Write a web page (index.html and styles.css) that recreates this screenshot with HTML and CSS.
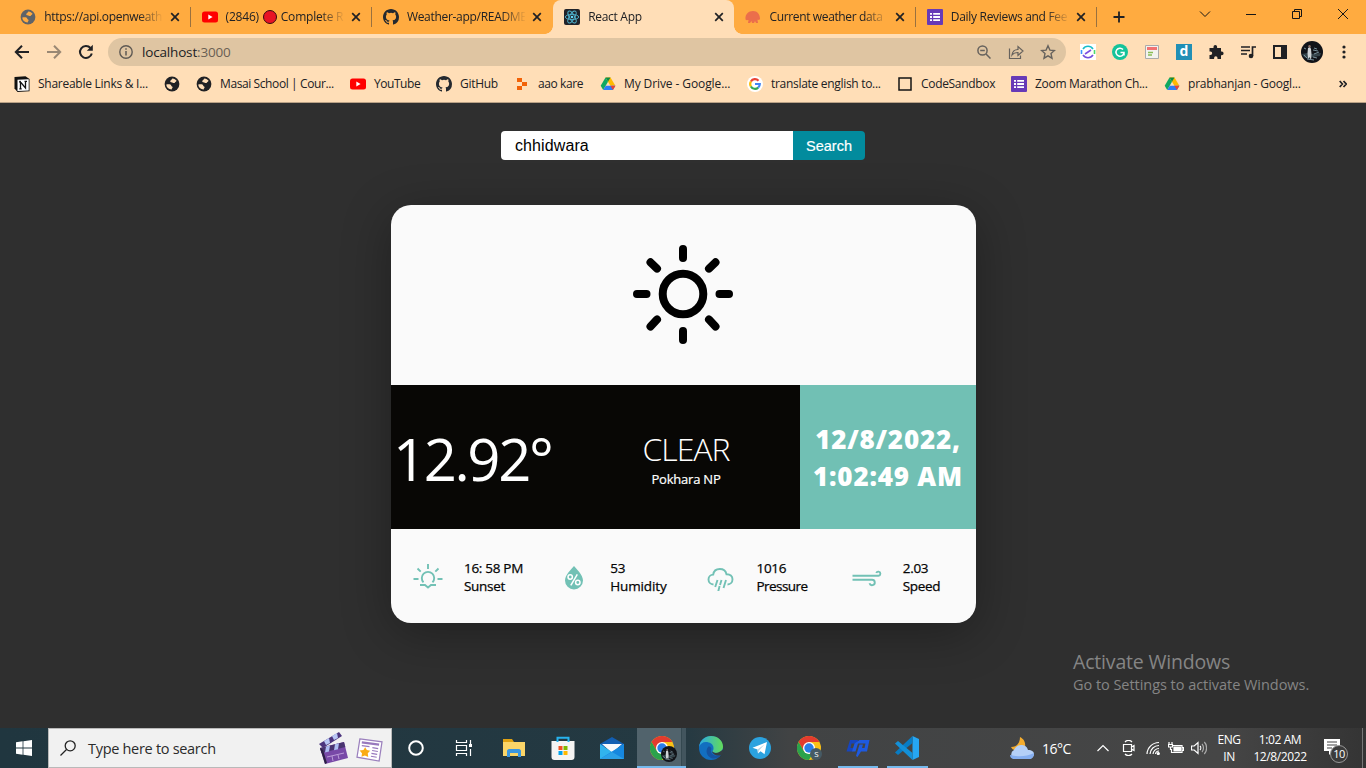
FILE: index.html
```html
<!DOCTYPE html>
<html lang="en">
<head>
<meta charset="utf-8">
<title>React App</title>
<link rel="stylesheet" href="styles.css">
</head>
<body>
<svg class="defs" aria-hidden="true">
  <defs>
    <symbol id="globe" viewBox="0 0 16 16"><circle cx="8" cy="8" r="7.400" fill="currentColor"/><path class="cut" d="M2.300 8.600C4 8.200 7 8 7.300 9.700c.2 1 1.300.6 1.300 1.500 0 1-.9 1-.9 2.300C4.800 13.600 2.400 11.300 2.300 8.600zM6.200 5.300c0-1 1.300-.8 1.400-1.700.1-.6.300-1 .9-1.200 1.700.2 3.200 1 4.100 2.400-.3 1-1.300.9-1.600 1.600-.3.800-1.600.9-2.200.3-.7-.6-2.600 0-2.600-1.400z"/></symbol>
    <symbol id="yt" viewBox="0 0 16 16"><rect y="2.500" width="16" height="11" rx="2.500" fill="#f00"/><path d="M6.300 5.500v5l4.300-2.500z" fill="#fff"/></symbol>
    <symbol id="gh" viewBox="0 0 16 16"><path fill="#24292f" d="M8 0C3.580 0 0 3.580 0 8c0 3.540 2.290 6.530 5.470 7.590.4.070.55-.17.55-.38 0-.19-.01-.82-.01-1.490-2.010.37-2.530-.49-2.690-.94-.09-.23-.48-.94-.82-1.130-.28-.15-.68-.52-.01-.53.63-.01 1.080.58 1.230.82.72 1.210 1.870.87 2.330.66.070-.52.280-.87.510-1.070-1.780-.2-3.640-.89-3.640-3.950 0-.87.310-1.590.82-2.150-.08-.2-.36-1.020.080-2.120 0 0 .67-.21 2.200.82a7.600 7.600 0 0 1 4 0c1.530-1.040 2.200-.82 2.200-.82.440 1.100.160 1.920.080 2.120.510.560.82 1.270.82 2.150 0 3.070-1.870 3.750-3.650 3.950.290.250.540.730.540 1.480 0 1.070-.01 1.930-.01 2.200 0 .210.150.460.550.380A8.010 8.010 0 0 0 16 8c0-4.420-3.580-8-8-8z"/></symbol>
    <symbol id="close" viewBox="0 0 10 10"><path d="M1.200 1.200l7.600 7.600M8.800 1.200L1.200 8.800" stroke="#202124" stroke-width="1.700"/></symbol>
    <symbol id="forms" viewBox="0 0 16 16"><rect width="16" height="16" rx="1" fill="#673ab7"/><path d="M3 4.800h2m1.200 0H13M3 8h2m1.200 0H13M3 11.200h2m1.200 0H13" stroke="#fff" stroke-width="1.800"/></symbol>
    <symbol id="drive" viewBox="0 0 16 16"><path d="M5.500 1.500h5l4.900 8.300h-5z" fill="#ffba00"/><path d="M5.500 1.500h5L8 5.800z" fill="#0c8a45"/><path d="M5.500 1.500L8 5.800 3.200 14 .7 9.800z" fill="#11a861"/><path d="M5.700 9.800h9.700L12.900 14H3.200z" fill="#2d7df6"/><path d="M10.400 9.800h5L12.900 14z" fill="#ea4335"/></symbol>
    <symbol id="chrome" viewBox="0 0 24 24"><circle cx="12" cy="12" r="12" fill="#fbc116"/><path d="M1.600 6A12 12 0 0 1 22.400 6H12L6.800 15z" fill="#e33b2e"/><path d="M1.600 6A12 12 0 0 0 12 24l5.200-9L12 18 6.800 15z" fill="#2ba24c"/><circle cx="12" cy="12" r="6" fill="#fff"/><circle cx="12" cy="12" r="4.700" fill="#2a7de9"/></symbol>
    <symbol id="avatar" viewBox="0 0 22 22"><circle cx="11" cy="11" r="11" fill="#111318"/><path d="M1 13l5-1 4 1 10-1-1 3-7 1-5 2-4-2z" fill="#34434a"/><path d="M7 7l2-1 1 2 .5 5-.5 6-1.500-3-1.500 2-.5-6z" fill="#cfd4d6"/><circle cx="8.500" cy="5.200" r="1.200" fill="#8d7065"/><path d="M3 7l2 1m8-1l3 1m-3 5l5-2M3 14l3 3M12 16l4 1M6 18l7 1M12 9l5 1" stroke="#77909b"/></symbol>
  </defs>
</svg>

<header class="browser">
  <div class="tabs">
    <div class="tab"><svg class="i16 gray-globe"><use href="#globe"/></svg><span class="tab-title">https://api.openweath</span><svg class="i10"><use href="#close"/></svg></div>
    <div class="tab"><svg class="i16"><use href="#yt"/></svg><span class="tab-title t2">(2846) <i class="red-dot"></i> Complete R</span><svg class="i10"><use href="#close"/></svg></div>
    <div class="tab no-line"><svg class="i16"><use href="#gh"/></svg><span class="tab-title">Weather-app/README</span><svg class="i10"><use href="#close"/></svg></div>
    <div class="tab active no-line">
      <svg class="i16" viewBox="0 0 16 16"><rect width="16" height="16" rx="2" fill="#20232a"/><g fill="none" stroke="#4fb4cf" stroke-width=".9"><ellipse cx="8" cy="8" rx="6.700" ry="2.600"/><ellipse cx="8" cy="8" rx="6.700" ry="2.600" transform="rotate(60 8 8)"/><ellipse cx="8" cy="8" rx="6.700" ry="2.600" transform="rotate(120 8 8)"/></g><circle cx="8" cy="8" r="1.300" fill="#61dafb"/></svg>
      <span class="tab-title">React App</span><svg class="i10"><use href="#close"/></svg></div>
    <div class="tab"><svg class="i16" viewBox="0 0 16 16"><path d="M.5 10.500C0 5 3.500 2 8 2s7 3.500 7 8c-1 1.500-2 .5-2.500 1l.5 3h-2l-1-2-1 2H7l-.5-2L5 14H3l.5-3c-1 0-2 .5-3-.5z" fill="#eb6e4b"/></svg><span class="tab-title t5">Current weather data</span><svg class="i10"><use href="#close"/></svg></div>
    <div class="tab"><svg class="i16"><use href="#forms"/></svg><span class="tab-title">Daily Reviews and Fee</span><svg class="i10"><use href="#close"/></svg></div>
    <svg class="new-tab" viewBox="0 0 12 12"><path d="M6 .5v11M.5 6h11" stroke="#202124" stroke-width="1.800"/></svg>
    <div class="window-buttons">
      <svg viewBox="0 0 12 12"><path d="M1 3.500l5 5 5-5"/></svg>
      <svg viewBox="0 0 12 12"><path d="M1 6.500h10"/></svg>
      <svg viewBox="0 0 12 12"><path d="M1.500 3.500h7v7h-7zM3.500 3.500v-2h7v7h-2"/></svg>
      <svg viewBox="0 0 12 12"><path d="M1 1l10 10M11 1L1 11"/></svg>
    </div>
  </div>

  <div class="toolbar">
    <svg class="nav-icon" viewBox="0 0 16 16"><path d="M15 8H2M8 1.800L1.800 8 8 14.200" fill="none" stroke="#202124" stroke-width="2"/></svg>
    <svg class="nav-icon faded" viewBox="0 0 16 16"><path d="M1 8h13M8 1.800L14.200 8 8 14.200" fill="none" stroke="#202124" stroke-width="2"/></svg>
    <svg class="nav-icon" viewBox="0 0 16 16"><path d="M13.800 9.500A6 6 0 1 1 12.500 4" fill="none" stroke="#202124" stroke-width="2"/><path d="M14.800.8V6.800H8.800z" fill="#202124"/></svg>
    <div class="address">
      <svg class="i14" viewBox="0 0 14 14"><circle cx="7" cy="7" r="6.200" fill="none" stroke="#5f5a54" stroke-width="1.400"/><path d="M7 6v4.500M7 3.300v1.500" stroke="#5f5a54" stroke-width="1.500"/></svg>
      <span class="url">localhost<span>:3000</span></span>
      <svg class="i14" viewBox="0 0 14 14"><g fill="none" stroke="#66625d" stroke-width="1.500"><circle cx="5.500" cy="5.500" r="4.600"/><path d="M3.200 5.500h4.600M9 9l4.500 4.500"/></g></svg>
      <svg class="i16" viewBox="0 0 16 16"><path d="M1.500 4.500v10h11v-3M4 11c.5-4 3-5.500 6-5.500v-3L15 7l-5 4.500v-3c-3 0-4.500.5-6 2.500z" fill="none" stroke="#66625d" stroke-width="1.200"/></svg>
      <svg class="i16" viewBox="0 0 16 16"><path d="M8 1.800l1.900 4.300 4.600.4-3.500 3.100 1 4.600L8 11.800l-4 2.400 1-4.600-3.500-3.100 4.600-.4z" fill="none" stroke="#66625d" stroke-width="1.400"/></svg>
    </div>
    <div class="extensions">
      <svg viewBox="0 0 16 16"><path fill="#fff" d="M0 0h16v16H0z"/><g fill="none" stroke-width="1.600"><path d="M3 5a6 6 0 0 1 10 0" stroke="#17bdc8"/><path d="M3 11a6 6 0 0 0 10 0" stroke="#734fdd"/><path d="M1.500 6v4" stroke="#3b93ff"/><path d="M14.500 6v4" stroke="#4cda6b"/><path d="M5 10l6-4" stroke="#7c4de0"/></g></svg>
      <svg viewBox="0 0 16 16"><circle cx="8" cy="8" r="8" fill="#15c39a"/><path d="M11 5.500A4 4 0 1 0 12 8.500H8.500M12 8.500v3" fill="none" stroke="#fff" stroke-width="1.500"/></svg>
      <svg viewBox="0 0 16 16"><path fill="#f3f3ef" stroke="#aaa" d="M1.500 1.500h13v13h-13z"/><path fill="#f27272" d="M3 3h10v3H3z"/><path d="M4 8.500h5M4 11h4" stroke="#89bd55" stroke-width="1.400"/></svg>
      <span class="ext-d">d</span>
      <svg viewBox="0 0 16 16"><path d="M1.500 4h4V2.800a1.800 1.800 0 0 1 3.600 0V4H13v3.600h.8a1.800 1.800 0 0 1 0 3.600H13V15H9.500v-1a1.700 1.700 0 0 0-3.400 0v1H1.500v-4h1a1.700 1.700 0 0 0 0-3.400h-1z" fill="#202124"/></svg>
      <svg viewBox="0 0 16 16"><path d="M1 3h9M1 6.500h9M1 10h6M12.500 12V3H16" fill="none" stroke="#202124" stroke-width="1.700"/><circle cx="11" cy="12" r="2.300" fill="#202124"/></svg>
      <svg viewBox="0 0 16 16"><path d="M2 2h12v12H2z" fill="none" stroke="#202124" stroke-width="2"/><path d="M9 2h5v12H9z" fill="#202124"/></svg>
      <svg class="profile"><use href="#avatar"/></svg>
      <svg viewBox="0 0 16 16"><g fill="#202124"><circle cx="8" cy="3" r="1.600"/><circle cx="8" cy="8" r="1.600"/><circle cx="8" cy="13" r="1.600"/></g></svg>
    </div>
  </div>

  <nav class="bookmarks">
    <a><svg viewBox="0 0 16 16"><path d="M.5 1l11-.8 4 2.800v12.300l-12 .6-3-3.400z" fill="#111"/><path d="M3.500 3.800l11.200-.6v11.300l-11.200.6z" fill="#fff"/><path d="M6.500 12.500V6l5 6V5.500M5 5.800h2M5.300 12.800h2.400M10.500 5.300H13" fill="none" stroke="#111" stroke-width="1.300"/></svg><span class="b1">Shareable Links &amp; I...</span></a>
    <a><svg><use href="#globe"/></svg></a>
    <a><svg><use href="#globe"/></svg><span class="b2">Masai School | Cour...</span></a>
    <a><svg><use href="#yt"/></svg><span class="b3">YouTube</span></a>
    <a><svg><use href="#gh"/></svg><span class="b4">GitHub</span></a>
    <a><svg viewBox="0 0 16 16"><path d="M3 2h5v4H3zM8 6h5v4H8zM3 10h5v4H3z" fill="#f26207"/></svg><span class="b5">aao kare</span></a>
    <a><svg><use href="#drive"/></svg><span class="b6">My Drive - Google...</span></a>
    <a><svg viewBox="0 0 16 16"><circle cx="8" cy="8" r="8" fill="#fff"/><g fill="none" stroke-width="2.200"><path d="M3.900 5.500A4.800 4.800 0 0 1 11.500 4.700" stroke="#ea4335"/><path d="M3.900 5.500a4.800 4.800 0 0 0 0 5" stroke="#fbbc05"/><path d="M3.900 10.500a4.800 4.800 0 0 0 7.300 1.100" stroke="#34a853"/><path d="M11.200 11.600A4.800 4.800 0 0 0 12.800 8H8" stroke="#4285f4"/></g></svg><span class="b7">translate english to...</span></a>
    <a><svg viewBox="0 0 16 16"><path d="M2 2h12v12H2z" fill="none" stroke="#151515" stroke-width="1.500"/></svg><span class="b8">CodeSandbox</span></a>
    <a><svg><use href="#forms"/></svg><span class="b9">Zoom Marathon Ch...</span></a>
    <a><svg><use href="#drive"/></svg><span class="b10">prabhanjan - Googl...</span></a>
    <svg class="more" viewBox="0 0 8 8"><path d="M.7 1l2.700 3L.7 7M4.500 1l2.700 3-2.700 3" fill="none" stroke="#202124" stroke-width="1.700"/></svg>
  </nav>
</header>

<main class="page">
  <form class="search"><input class="search-input" type="text" value="chhidwara"><button class="search-button" type="button">Search</button></form>

  <article class="card">
    <div class="card-icon">
      <svg viewBox="0 0 100 100"><g fill="none" stroke="#000" stroke-width="8" stroke-linecap="round"><circle cx="50" cy="49" r="20.300"/><path d="M50 4v9M50 86v9M4 49h9.500M86.500 49H96M17.500 17.300l6.500 6.300M76 23.600l6.500-6.300M17.500 81.500l6.500-7M76 74.500l6.500 7"/></g></svg>
    </div>
    <div class="summary">
      <div class="conditions">
        <div class="temperature">12.92°</div>
        <div class="description"><div class="sky">CLEAR</div><div class="place">Pokhara NP</div></div>
      </div>
      <div class="datetime"><span>12/8/2022,</span><span>1:02:49 AM</span></div>
    </div>
    <div class="details">
      <div class="detail">
        <svg viewBox="0 0 30 30"><g fill="none" stroke="#72c1b5" stroke-width="1.900"><path d="M10.500 21.300a6.200 6.200 0 1 1 9 0M.5 18h5M24.500 18h5M15 3v5M4.500 7.500l3.200 3.200M25.500 7.500l-3.200 3.200M7 24h5l3 2.500 3-2.500h5"/></g></svg>
        <div><p>16: 58 PM</p><p>Sunset</p></div></div>
      <div class="detail">
        <svg viewBox="0 0 30 30"><path d="M15 5c2.500 3 9 9 9 14.500a9 9 0 0 1-18 0C6 14 12.500 8 15 5z" fill="#72c1b5"/><g fill="none" stroke="#fff" stroke-width="1.500"><circle cx="11.200" cy="16" r="2.200"/><circle cx="18.800" cy="21.500" r="2.200"/><path d="M18.300 13.300l-6.500 11"/></g></svg>
        <div><p>53</p><p class="wide">Humidity</p></div></div>
      <div class="detail">
        <svg viewBox="0 0 30 30"><g fill="none" stroke="#72c1b5" stroke-width="1.900"><path d="M7.500 23.500c-3-.2-5-2.400-5-5s2-4.800 4.700-4.900C7.700 10 10.500 8 13.800 8s6 2 6.700 5.200c3.700-.2 6 2 6 5s-2 5.300-5 5.300M11.500 19l-2.300 7M15.500 19l-1.500 5M20 19l-2.500 8M13.600 25l-1.500 6"/></g></svg>
        <div><p>1016</p><p class="tight">Pressure</p></div></div>
      <div class="detail">
        <svg viewBox="0 0 30 30"><g fill="none" stroke="#72c1b5" stroke-width="1.900"><path d="M.5 14.800h26a2.100 2.100 0 1 0-2.200-2.800M.5 18.800h19.500a2.700 2.700 0 1 1-2.500 3.500"/></g></svg>
        <div><p>2.03</p><p>Speed</p></div></div>
    </div>
  </article>

  <aside class="watermark"><p class="wm-title">Activate Windows</p><p class="wm-text">Go to Settings to activate Windows.</p></aside>
</main>

<footer class="taskbar">
  <div class="start"><svg viewBox="0 0 16 16"><path d="M0 2.200L6.600 1.300V7.600H0zM7.400 1.200L16 0v7.600H7.400zM0 8.400h6.600v6.300L0 13.800zM7.400 8.400H16V16l-8.600-1.200z" fill="#fff"/></svg></div>
  <div class="task-search">
    <svg class="i16" viewBox="0 0 16 16"><circle cx="10.200" cy="5.800" r="5" fill="none" stroke="#222" stroke-width="1.300"/><path d="M6.500 9.500L.5 15.500" stroke="#222" stroke-width="1.300"/></svg>
    <span>Type here to search</span>
    <svg class="clapper" viewBox="0 0 32 34"><path d="M1 13L21 1l3 4L5 17z" fill="#4b347d"/><path d="M6 10l5-3 1 5-4 2zM14 5l5-3 1 5-4 2z" fill="#b9c6f5"/><path d="M2 17l24-6 4 16-23 6z" fill="#7849a7"/><path d="M2 17l24-6 1.300 5L3.500 22z" fill="#49346f"/><path d="M8 15.500l4-1-1 6-4 1zM17 13.200l4-1-1 6-4 1z" fill="#aebdf2"/><path d="M9 26l17-4M14 25l1 5m5-6l1 4" stroke="#bb9bd8"/><path d="M2 17l3 2 4 13-2 1z" fill="#2c2145"/></svg>
    <svg class="newsicon" viewBox="0 0 28 26"><path d="M4 1l23 3-3 20-23-4z" fill="#fff" stroke="#9b80bd" stroke-width="1.300"/><path d="M6 4.500l18 2.300" stroke="#9879bd" stroke-width="2.300"/><path d="M17 10l6 1M16.700 13l6 1M16 16l6 1M15.500 19l6 1M6 8l8 1" stroke="#9879bd" stroke-width="1.200"/><path d="M9.500 9.500l1.700 3 3.500.8-2.500 2.500.5 4-3.500-1.500-3.500 1.200.5-3.700-2.500-2.800 4-.5z" fill="#fbac14"/></svg>
  </div>
  <div class="apps">
    <div class="app"><svg viewBox="0 0 24 24"><circle cx="12" cy="12" r="6.800" fill="none" stroke="#fff" stroke-width="2"/></svg></div>
    <div class="app"><svg class="task-view" viewBox="0 0 24 24"><path d="M4.500 4v2.500h10V4M4.500 20v-2.500h10V20M4.500 9.500h10v5h-10zM18.500 4v4m0 5v7" fill="none" stroke="#fff" stroke-width="1.200"/><path d="M17 8h3v3h-3z" fill="#fff"/></svg></div>
    <div class="app"><svg viewBox="0 0 24 24"><path d="M1 3h9l2 3H1z" fill="#e0a213"/><path d="M1 6h22v14H1z" fill="#fbd568"/><path d="M5 21v-6c0-1 1-2 2-2h10c1 0 2 1 2 2v6h-3v-4H8v4z" fill="#3b96df"/></svg></div>
    <div class="app"><svg viewBox="0 0 24 24"><path d="M.5 5h23v16a3 3 0 0 1-3 3h-17a3 3 0 0 1-3-3z" fill="#f5f4f3"/><path d="M6.500 6V1.800h11V6" fill="none" stroke="#27b3ee" stroke-width="2"/><path d="M7.500 10h4v4h-4z" fill="#f25022"/><path d="M12.500 10h4v4h-4z" fill="#7fba00"/><path d="M7.500 15h4v4h-4z" fill="#00a4ef"/><path d="M12.500 15h4v4h-4z" fill="#ffb900"/></svg></div>
    <div class="app"><svg viewBox="0 0 24 24"><path d="M0 8L12 1l12 7v3H0z" fill="#125eb2"/><path d="M2 8h20l-10 9z" fill="#f6f8fc"/><path d="M0 8l12 8 12-8v15H0z" fill="#31b3ee"/><path d="M0 23L24 8v15z" fill="#1687df"/><path d="M0 23l12-7 12 7z" fill="#2ba0e8"/></svg></div>
    <div class="app current"><svg><use href="#chrome"/></svg><svg class="badge-avatar" viewBox="0 0 22 22"><use href="#avatar"/></svg></div>
    <div class="app"><svg viewBox="0 0 24 24"><defs><linearGradient id="edge"><stop stop-color="#2ba9e5"/><stop offset="1" stop-color="#63db59"/></linearGradient></defs><circle cx="12" cy="12" r="12" fill="#126fc0"/><path d="M0 11C1 4 6 0 12 0c7 0 12 5 12 10.500 0 4-3 6.500-6.500 6.500-3 0-4.500-1.200-4-2 1-1 1-2 1-3C14.500 8 10.500 6 7 6 3.500 6 1 8 0 11z" fill="url(#edge)"/><path d="M9 11c-3 4-1 9 3 11 4 1.500 8 0 10-3-5 2-9 0-10-3-.6-2 .5-3 .5-3-.5-2-2-3-3.500-2z" fill="#1553a0"/><path d="M13 15c1 2 5 3 9 0l2.500-2v4l-1.500 2c-5 1.500-10-.5-10-4z" fill="#333d43"/></svg></div>
    <div class="app"><svg viewBox="0 0 24 24"><circle cx="12" cy="12" r="11" fill="#2ba2df"/><path d="M4.500 11.800L19 6l-2.500 12.200-4-3-2.500 2.300-.5-4z" fill="#fff"/><path d="M9.500 13.500L16.500 8.500 11 14.500l-1 3z" fill="#b8d8e9"/></svg></div>
    <div class="app"><svg><use href="#chrome"/></svg><span class="badge-s">S</span></div>
    <div class="app running"><svg viewBox="0 0 24 24"><path d="M4 4h8l-1 3.500H5.500L4.500 12H8L6.500 15.500H.5z" fill="#1745bd"/><path d="M13.500 4H23.500L21 15.500h-6L11.500 21l-1.500-1 3.500-11.500H17L16 12h2.500l1-4.500H12L9.500 15.500H6L8.500 7.500z" fill="#1e5ae0"/></svg></div>
    <div class="app running"><svg viewBox="0 0 24 24"><path d="M17.500 0L24 3v18l-6.500 3z" fill="#26a6f2"/><path d="M17.500 0v7L3 19l-3-2.500z" fill="#087cc4"/><path d="M0 7.500L3 5l14.500 12v7z" fill="#1390d8"/></svg></div>
  </div>
  <div class="tray">
    <svg class="weather" viewBox="0 0 26 24"><path d="M11 1c6 3 6 9 4 13H6c-2 0-3-1-4-3 6 0 9-4 9-10z" fill="#f5ad2e"/><path d="M5 23a5 5 0 0 1 0-9c1-3 4-5 7-5s6 1 7 5c4 0 6 2 6 4s-2 5-5 5z" fill="#b5d0f7"/><path d="M4 23c-2-1-3-2-3-4 8 2 16 2 24-2 0 4-2 6-5 6z" fill="#86aff0"/></svg>
    <span class="degrees">16°C</span>
    <svg class="chev" viewBox="0 0 12 12"><path d="M.5 9L6 3.500 11.500 9"/></svg>
    <svg class="meet" viewBox="0 0 14 16"><path d="M1.500 4.500h8v7h-8zM9.500 7l2.500-1.500v5L9.500 9M3 2C5-.2 8-.2 10 2M3 14c2 2.200 5 2.200 7 0"/></svg>
    <svg class="wifi" viewBox="0 0 14 14"><path d="M1 13A12 12 0 0 1 13 1.500M4 13a9 9 0 0 1 9-8.500M7 13a6 6 0 0 1 6-5.500M9.500 13A3.500 3.500 0 0 1 13 10"/><circle cx="12.300" cy="12.500" r="1" fill="#fff"/></svg>
    <svg class="battery" viewBox="0 0 16 14"><path d="M4.500 4.500h9.500v7H3.500V8M14 6.500h1.500v3H14M1 1v2m3-2v2M.5 3.500h4V6h-4zM2.500 6v3"/><path d="M6 6h6.500v4H6z" fill="#fff"/></svg>
    <svg class="sound" viewBox="0 0 16 14"><path d="M.5 5h2.700L7 1.500v11L3.200 9H.5zM9 5c1 1 1 3 0 4"/><path d="M11 3c2 2 2 6 0 8M13.300 1c3 3 3 9 0 12" opacity=".55"/></svg>
    <div class="lang"><span>ENG</span><span>IN</span></div>
    <div class="clock"><span>1:02 AM</span><span>12/8/2022</span></div>
    <div class="notice"><svg viewBox="0 0 16 16"><path d="M0 0h16v12H9l-4 4v-4H0z" fill="#fff"/><path d="M3 3h10M3 6h10M3 9h5" stroke="#444" stroke-width="1.200"/></svg><span>10</span></div>
    <i class="peek"></i>
  </div>
</footer>
</body>
</html>
```
FILE: styles.css
```css
* { box-sizing: border-box; }
body {
  margin: 0; width: 1366px; height: 768px; overflow: hidden;
  display: flex; flex-direction: column;
  font-family: "Open Sans", "Noto Sans", sans-serif; color: #202124;
  background: #2f2f2f;
}
p { margin: 0; }
svg { display: block; flex: none; }
.defs { width: 0; height: 0; position: absolute; }
.i10 { width: 10px; height: 10px; }
.i14 { width: 14px; height: 14px; }
.i16 { width: 16px; height: 16px; }
.cut { fill: var(--cut, #ffdeb7); }

.browser { height: 103px; flex: none; background: #ffdeb7; border-bottom: 1px solid #b9a186; }
.tabs { height: 34px; background: #ffab40; display: flex; align-items: center; padding-left: 9px; font-size: 12px; letter-spacing: -.3px; }
.tab { width: 181.300px; height: 34px; display: flex; align-items: center; padding: 0 10px 0 11.300px; position: relative; flex: none; }
.tab::after { content: ""; position: absolute; right: -.5px; top: 7px; width: 1px; height: 20px; background: #99713f; }
.tab.no-line::after { display: none; }
.tab.active { background: #ffdeb7; border-radius: 8px 8px 0 0; }
.tab.active::before { content: ""; position: absolute; left: -8px; right: -8px; bottom: 0; height: 8px;
  background: radial-gradient(circle at 0 0, transparent 7.500px, #ffdeb7 8px) left / 8px 8px no-repeat, radial-gradient(circle at 8px 0, transparent 7.500px, #ffdeb7 8px) right / 8px 8px no-repeat; }
.tab-title { width: 118px; margin: 0 7.500px 0 8px; white-space: nowrap; line-height: 20px; flex: none;
  -webkit-mask-image: linear-gradient(90deg, #000 80%, transparent 101%); mask-image: linear-gradient(90deg, #000 80%, transparent 101%); }
.t5 { letter-spacing: -.36px; }
.t2 { letter-spacing: -.2px; }
.gray-globe { color: #5f6368; --cut: #ffab40; }
.red-dot { display: inline-block; width: 14px; height: 14px; margin: 0 1px; border-radius: 50%; background: #e81224; border: 1px solid #350810; vertical-align: -2.500px; }
.new-tab { width: 12px; height: 12px; margin-left: 16px; }
.window-buttons { display: flex; gap: 34px; margin: -6px 17px 0 auto; }
.window-buttons svg { width: 12px; height: 12px; fill: none; stroke: #161616; stroke-width: 1; }

.toolbar { height: 35px; display: flex; align-items: center; padding: 1px 13px 0 14px; }
.nav-icon { width: 16px; height: 16px; margin-right: 16px; }
.nav-icon:nth-child(3) { margin-right: 14px; }
.faded { opacity: .45; }
.address { width: 958px; height: 28px; border-radius: 14px; background: #dfc5a2; display: flex; align-items: center; padding: 0 10px 0 11px; }
.url { margin: 0 auto 0 9px; font-size: 13.500px; letter-spacing: -.17px; line-height: 20px; }
.url span { color: #6a6054; }
.address .i16 { margin-left: 17px; }
.address .i16 + .i16 { margin-left: 16px; }
.extensions { display: flex; align-items: center; gap: 16px; margin-left: 14px; }
.extensions svg, .ext-d { width: 16px; height: 16px; }
.ext-d { background: #218fb5; color: #fff; font-weight: 700; font-size: 14px; line-height: 14px; text-align: center; }
.extensions .profile { width: 22px; height: 22px; margin: 0 -3px; }

.bookmarks { height: 33px; display: flex; align-items: center; gap: 16px; padding: 0 19px 3px 14px; font-size: 12px; letter-spacing: -.3px; }
.bookmarks a { display: flex; align-items: center; gap: 8px; white-space: nowrap; }
.bookmarks a svg { width: 16px; height: 16px; }
.bookmarks span { line-height: 20px; }
.b1 { width: 110px; letter-spacing: -.26px; }
.b2 { width: 114px; letter-spacing: -.4px; }
.b3 { width: 46px; letter-spacing: -.45px; }
.b4 { width: 38px; }
.b5 { width: 46px; letter-spacing: -.4px; }
.b6 { width: 107px; letter-spacing: -.1px; }
.b7 { width: 110px; }
.b8 { width: 74px; letter-spacing: -.32px; }
.b9 { width: 113px; }
.b10 { width: 113px; letter-spacing: -.2px; }
.bookmarks .more { width: 8px; height: 8px; margin-left: auto; }

.page { height: 625px; flex: none; position: relative; display: flex; flex-direction: column; align-items: center; padding-top: 28px; background: #2f2f2f; overflow: hidden; }
.search { display: flex; height: 29px; width: 364px; }
.search-input { width: 292px; border: 0; padding: 0 14px; font: 16px "Liberation Sans", sans-serif; letter-spacing: .1px; color: #000; background: #fff; border-radius: 4px 0 0 4px; outline: 0; }
.search-button { width: 72px; border: 0; padding: 0; color: #fff; background: #028b9d; font: 14.500px "Liberation Sans", sans-serif; -webkit-text-stroke: .2px #fff; border-radius: 0 4px 4px 0; }
.card { width: 585px; height: 418px; margin: 45px 0 0 1px; border-radius: 20px; background: #fafafa; overflow: hidden; box-shadow: 0 10px 50px rgba(0, 0, 0, .32); }
.card-icon { height: 180px; display: flex; align-items: center; justify-content: center; }
.card-icon svg { width: 100px; height: 100px; margin-right: 1px; }
.summary { height: 144px; display: flex; }
.conditions { width: 409px; background: #080705; color: #fff; display: flex; align-items: center; }
.temperature { width: 196px; padding: 3px 0 0 2px; font-size: 58px; line-height: 80px; letter-spacing: -2.400px; white-space: nowrap; }
.description { width: 198px; text-align: center; padding-top: 7px; }
.sky { font-size: 32px; font-weight: 300; line-height: 36px; letter-spacing: -1px; }
.place { font-size: 13px; line-height: 23px; padding-top: 1px; margin-bottom: -1px; letter-spacing: -.2px; -webkit-text-stroke: .2px #fff; }
.datetime { width: 176px; background: #71c0b4; color: #fff; display: flex; flex-direction: column; align-items: center; justify-content: center; font-size: 26px; font-weight: 800; line-height: 37px; padding: 1px 0 0; white-space: nowrap; letter-spacing: .8px; }
.details { height: 94px; display: flex; align-items: center; color: #050505; font-size: 13.500px; line-height: 18px; letter-spacing: -.3px; -webkit-text-stroke: .25px #050505; }
.detail { width: 146.250px; display: flex; align-items: center; gap: 21px; padding: 1px 0 0 22px; white-space: nowrap; }
.detail svg { width: 30px; height: 30px; margin-top: -2px; }
.wide { letter-spacing: -.13px; }
.tight { letter-spacing: -.55px; }

.watermark { position: absolute; left: 1073px; top: 546px; color: #858585; white-space: nowrap; }
.wm-title { font-size: 19.500px; line-height: 26px; letter-spacing: -.18px; }
.wm-text { font-size: 14.500px; line-height: 20px; letter-spacing: -.04px; }

.taskbar { height: 40px; flex: none; display: flex; background: linear-gradient(90deg, #20363f 0, #243942 680px, #414344 790px, #464646 1220px, #343434 1366px); color: #fff; }
.start { width: 48px; display: flex; align-items: center; justify-content: center; }
.start svg { width: 16px; height: 16px; }
.task-search { width: 344px; background: #f1f1f1; border: 1px solid #b9b9b9; display: flex; align-items: center; padding: 0 8px 0 11px; color: #2b2b2b; font-size: 14.500px; letter-spacing: -.3px; white-space: nowrap; }
.task-search > span { margin: 0 auto 0 12px; }
.clapper { width: 32px; height: 34px; margin-right: 6px; }
.newsicon { width: 27px; height: 25px; margin-top: 4px; }
.apps { display: flex; margin-left: -.5px; }
.app { width: 49.100px; height: 40px; display: flex; align-items: center; justify-content: center; position: relative; }
.app svg { width: 24px; height: 24px; }
.app .task-view { margin-right: 3px; }
.app.current { background: linear-gradient(90deg, #51636c 44px, #344850 44px, #344850 45px, #42555e 45px); box-shadow: inset 0 -2px #75b9ed; }
.app .badge-avatar { width: 16px; height: 16px; position: absolute; right: 9px; bottom: 6px; }
.badge-s { position: absolute; right: 11px; bottom: 8px; width: 12px; height: 12px; border-radius: 50%; background: #465a64; font-size: 8px; line-height: 12px; text-align: center; }
.app.running::after { content: ""; position: absolute; left: 5px; right: 4px; bottom: 0; height: 2px; background: #75b9ed; }
.tray { margin-left: auto; display: flex; align-items: center; font-size: 12px; line-height: 17px; }
.tray > svg { fill: none; stroke: #fff; stroke-width: 1.200; }
.tray .weather { width: 26px; height: 24px; stroke: none; margin-right: 7px; }
.degrees { width: 29px; font-size: 14px; letter-spacing: -.5px; margin-right: 26px; white-space: nowrap; }
.chev { width: 12px; height: 12px; margin-right: 13px; }
.meet { width: 14px; height: 16px; margin-right: 10px; }
.wifi { width: 14px; height: 14px; margin-right: 8px; }
.battery { width: 16px; height: 14px; margin-right: 7px; }
.sound { width: 16px; height: 14px; margin-right: 10px; }
.lang, .clock { display: flex; flex-direction: column; align-items: center; letter-spacing: -.4px; }
.lang { width: 24px; }
.clock { width: 54px; margin-left: 12px; }
.notice { width: 26px; height: 24px; margin: 6px 12px 0 17px; position: relative; }
.notice svg { width: 16px; height: 16px; }
.notice span { position: absolute; left: 6px; top: 6px; width: 18px; height: 18px; border-radius: 50%; border: 1px solid #999; background: #3b3b3b; font-size: 11px; line-height: 16px; text-align: center; letter-spacing: -.5px; }
.peek { width: 4px; height: 40px; border-left: 1px solid #777; }
```
